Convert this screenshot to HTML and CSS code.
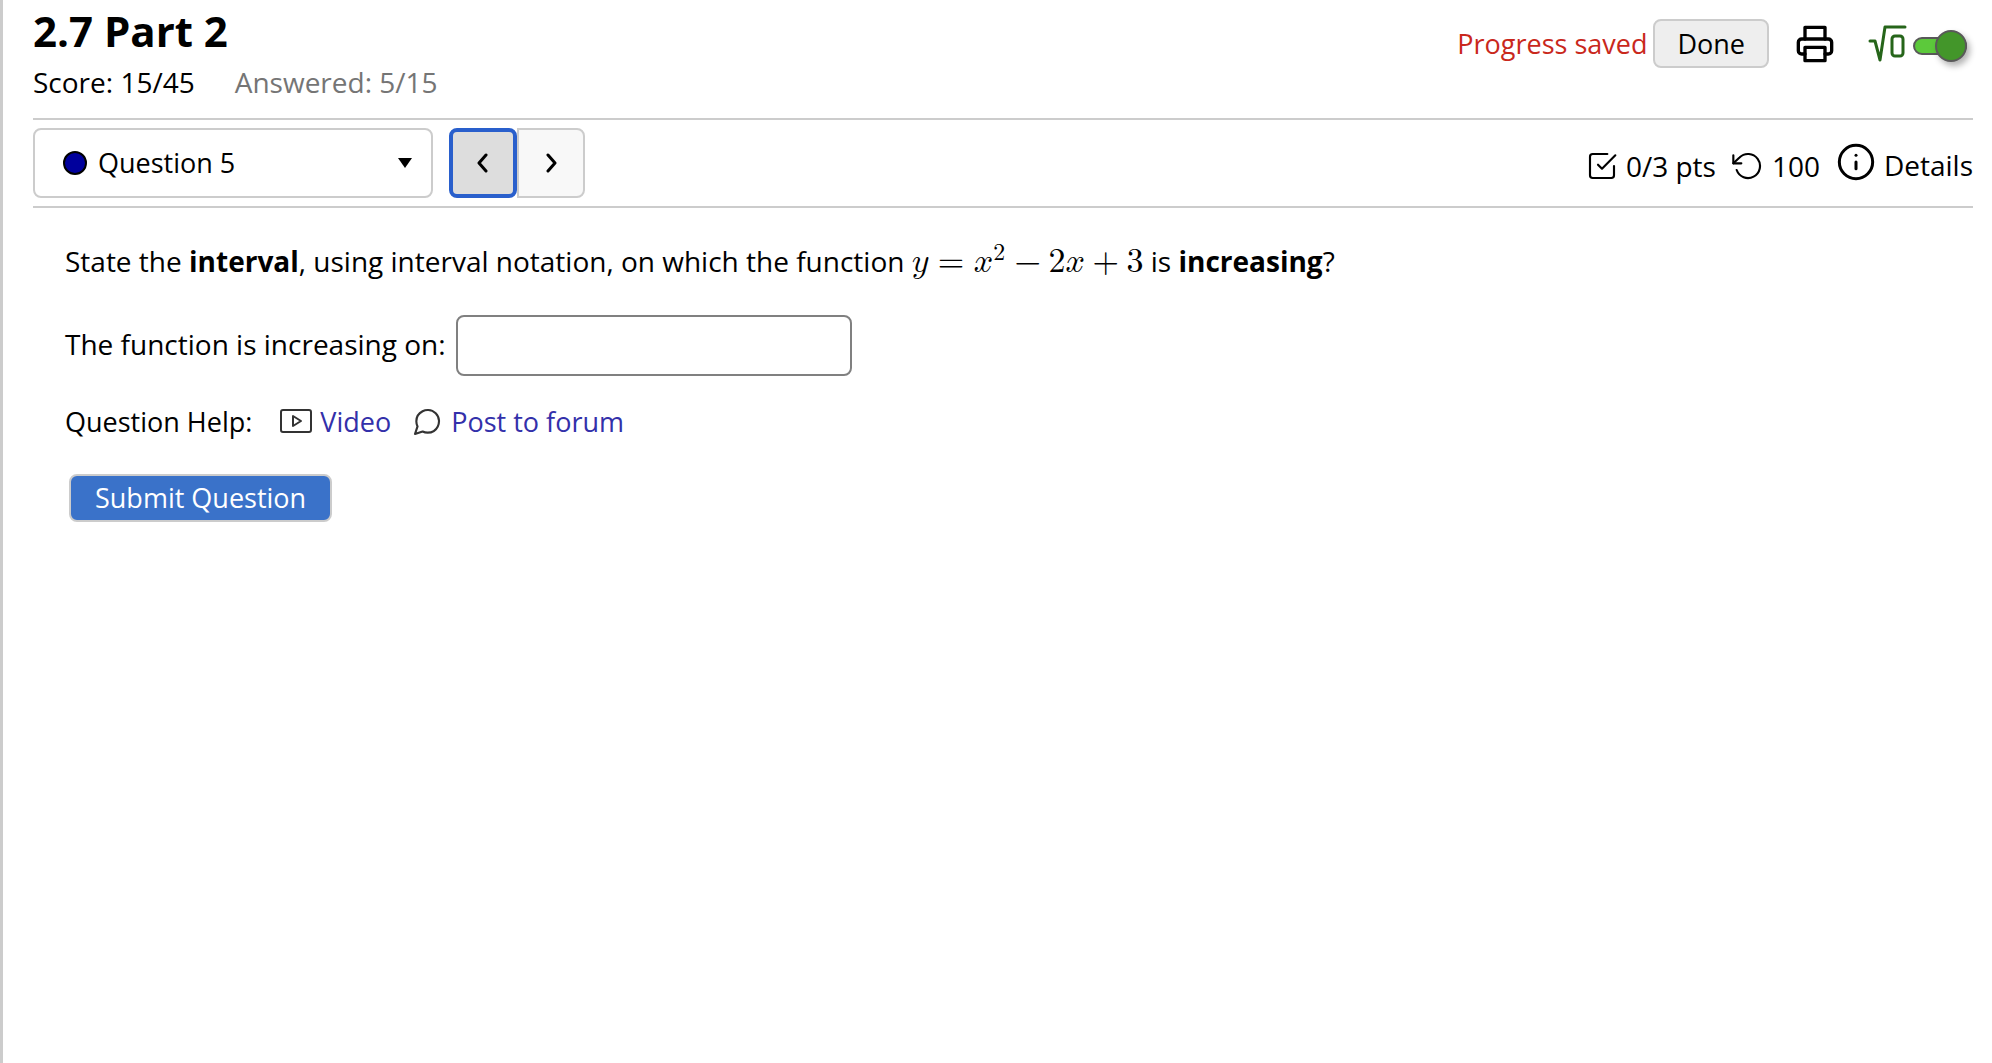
FILE: index.html
```
<!DOCTYPE html>
<html lang="en">
<head>
    <meta charset="UTF-8">
    <meta name="viewport" content="width=device-width, initial-scale=1.0">
    <title>2.7 Part 2</title>
    <link rel="stylesheet" href="styles.css">
</head>
<body>

<header class="assess-header">
    <div class="header-info">
        <h1>2.7 Part 2</h1>
        <div class="scores">
            <span>Score: 15/45</span>
            <span class="subdued">Answered: 5/15</span>
        </div>
    </div>
    <div class="header-tools">
        <span class="save-notice">Progress saved</span>
        <button type="button" class="done-btn">Done</button>
        <button type="button" class="plain-btn" aria-label="Print">
            <svg class="icon icon-large" viewBox="0 0 24 24">
                <polyline points="6 9 6 2 18 2 18 9"></polyline>
                <path d="M6 18H4a2 2 0 0 1-2-2v-5a2 2 0 0 1 2-2h16a2 2 0 0 1 2 2v5a2 2 0 0 1-2 2h-2"></path>
                <rect x="6" y="14" width="12" height="8"></rect>
            </svg>
        </button>
        <label class="math-toggle">
            <svg class="icon math-icon" viewBox="0 0 40 38" aria-hidden="true">
                <path d="M3 16h5l5 19L18 2h20"></path>
                <rect x="25" y="11" width="11" height="20" rx="3"></rect>
            </svg>
            <input type="checkbox" class="switch" aria-label="Equation editor" checked>
        </label>
    </div>
</header>

<!-- Question navigation -->
<nav class="question-nav">
    <div class="question-select">
        <svg class="status-dot" viewBox="0 0 24 24" aria-hidden="true">
            <circle cx="12" cy="12" r="11"></circle>
        </svg>
        <select id="question-number" aria-label="Question">
            <option selected>Question 5</option>
        </select>
        <svg class="caret" viewBox="0 0 16 12" aria-hidden="true">
            <path d="M1 1h14L8 11z"></path>
        </svg>
    </div>
    <div class="step-buttons">
        <button type="button" class="step-btn prev-btn" aria-label="Previous question">
            <svg class="icon chevron" viewBox="0 0 12 20"><polyline points="9 2 2 10 9 18"></polyline></svg>
        </button>
        <button type="button" class="step-btn next-btn" aria-label="Next question">
            <svg class="icon chevron" viewBox="0 0 12 20"><polyline points="3 2 10 10 3 18"></polyline></svg>
        </button>
    </div>
    <div class="question-details">
        <svg class="icon icon-medium" viewBox="0 0 24 24" aria-hidden="true">
            <polyline points="9 11 12 14 22 4"></polyline>
            <path d="M21 12v7a2 2 0 0 1-2 2H5a2 2 0 0 1-2-2V5a2 2 0 0 1 2-2h11"></path>
        </svg>
        <span class="points">0/3 pts</span>
        <svg class="icon icon-medium" viewBox="0 0 24 24" aria-hidden="true">
            <polyline points="1 4 1 10 7 10"></polyline>
            <path d="M3.51 15a9 9 0 1 0 2.13-9.36L1 10"></path>
        </svg>
        <span class="tries">100</span>
        <button type="button" class="plain-btn details-btn">
            <svg class="icon icon-large info-icon" viewBox="0 0 24 24" aria-hidden="true">
                <circle cx="12" cy="12" r="10"></circle>
                <line x1="12" y1="16" x2="12" y2="12"></line>
                <line x1="12" y1="8" x2="12" y2="8"></line>
            </svg>
            <span>Details</span>
        </button>
    </div>
</nav>

<!-- Question body -->
<main class="question">
    <p>State the <strong>interval</strong>, using interval notation, on which the function
        <math><mi>y</mi><mo>=</mo><msup><mi>x</mi><mn>2</mn></msup><mo>−</mo><mn>2</mn><mi>x</mi><mo>+</mo><mn>3</mn></math>
        is <strong>increasing</strong>?</p>
    <div class="answer">
        <label for="answer-box">The function is increasing on:</label>
        <input type="text" id="answer-box" autocomplete="off">
    </div>
    <div class="help">
        <span class="help-label">Question Help:</span>
        <a href="#video">
            <svg class="icon icon-medium" viewBox="0 0 32 32" aria-hidden="true">
                <rect x="1" y="4" width="30" height="22" rx="2"></rect>
                <path d="M13 10v10l8-5z"></path>
            </svg>
            <span>Video</span>
        </a>
        <a href="#forum">
            <svg class="icon icon-medium" viewBox="0 0 24 24" aria-hidden="true">
                <path d="M21 11.5a8.38 8.38 0 0 1-.9 3.8 8.5 8.5 0 0 1-7.6 4.7 8.38 8.38 0 0 1-3.8-.9L3 21l1.9-5.7a8.38 8.38 0 0 1-.9-3.8 8.5 8.5 0 0 1 4.7-7.6 8.38 8.38 0 0 1 3.8-.9h.5a8.48 8.48 0 0 1 8 8v.5z"></path>
            </svg>
            <span>Post to forum</span>
        </a>
    </div>
    <button type="button" class="submit-btn">Submit Question</button>
</main>

</body>
</html>
```
FILE: styles.css
```
body {
    font-family: "Trebuchet MS", "Open Sans", sans-serif;
    font-size: 27px;
    line-height: 36px;
    color: #000;
    background-color: #fff;
    margin: 0;
    padding: 0 19px 0 30px;
    border-left: 3px solid #ccc;
    box-sizing: border-box;
    min-height: 100vh;
}

button,
input,
select {
    font: inherit;
    color: inherit;
    box-sizing: border-box;
}

button {
    cursor: pointer;
}

.icon {
    display: block;
    flex: none;
    fill: none;
    stroke: currentColor;
    stroke-width: 2;
    stroke-linecap: round;
    stroke-linejoin: round;
}

.icon-large {
    width: 40px;
    height: 40px;
}

.icon-medium {
    width: 32px;
    height: 32px;
    stroke-width: 1.6;
}

.plain-btn {
    display: flex;
    align-items: center;
    padding: 0;
    border: none;
    background: none;
}

/* Header */
.assess-header {
    display: flex;
    justify-content: space-between;
    align-items: flex-start;
    padding-bottom: 18px;
    border-bottom: 2px solid #ccc;
}

h1 {
    margin: 0;
    padding-top: 2px;
    font-size: 42px;
    line-height: 58px;
}

.scores {
    display: flex;
    gap: 40px;
    padding-top: 4px;
    font-size: 28px;
}

.subdued {
    color: #757575;
}

.header-tools {
    display: flex;
    align-items: center;
    padding-top: 19px;
}

.save-notice {
    color: #c9281c;
}

.done-btn {
    height: 49px;
    margin: 0 26px 0 6px;
    padding: 0 22px;
    border: 2px solid #ccc;
    border-radius: 8px;
    background-color: #eee;
}

.math-toggle {
    display: flex;
    align-items: center;
    gap: 6px;
    margin: 0 6px 0 32px;
    color: #26651a;
}

.math-icon {
    width: 40px;
    height: 38px;
    stroke-width: 3;
}

.switch {
    appearance: none;
    display: flex;
    align-items: center;
    justify-content: flex-end;
    width: 54px;
    height: 18px;
    margin: 4px 0 0;
    border: 2px solid #595959;
    border-radius: 9px;
    background-color: #5cc93b;
    cursor: pointer;
}

.switch::before {
    content: "";
    flex: none;
    width: 28px;
    height: 28px;
    margin-right: -2px;
    border: 2px solid #595959;
    border-radius: 50%;
    background-color: #43962a;
    box-shadow: 3px 4px 6px rgba(0, 0, 0, 0.3);
}

/* Navigation */
.question-nav {
    display: flex;
    align-items: center;
    padding: 8px 0;
    border-bottom: 2px solid #ccc;
}

.question-select {
    display: flex;
    align-items: center;
    width: 400px;
    height: 70px;
    padding: 0 18px 0 28px;
    border: 2px solid #ccc;
    border-radius: 8px;
    box-sizing: border-box;
}

.question-select select {
    appearance: none;
    flex: 1;
    padding: 0 0 0 11px;
    border: none;
    background: none;
}

.status-dot {
    width: 24px;
    height: 24px;
    fill: #00009c;
    stroke: #000;
    stroke-width: 2;
}

.caret {
    width: 16px;
    height: 12px;
}

.step-buttons {
    display: flex;
    margin-left: 16px;
}

.step-btn {
    display: flex;
    align-items: center;
    justify-content: center;
    width: 68px;
    height: 70px;
    padding: 0;
    border: 2px solid #ccc;
    background-color: #f8f8f8;
}

.prev-btn {
    border: 4px solid #295fcc;
    border-radius: 8px;
    background-color: #ddd;
}

.next-btn {
    border-radius: 0 8px 8px 0;
}

.chevron {
    width: 12px;
    height: 20px;
    stroke-width: 3;
}

.question-details {
    display: flex;
    align-items: center;
    padding-top: 6px;
    margin-left: auto;
    font-size: 28px;
}

.points {
    padding: 0 16px 0 8px;
}

.tries {
    padding: 0 16px 0 8px;
}

.details-btn {
    gap: 8px;
}

.info-icon {
    margin-bottom: 8px;
    stroke-width: 1.8;
}

.details-btn span {
    padding-bottom: 2px;
}

/* Question */
.question {
    padding: 35px 32px;
}

.question p {
    margin: 0;
    font-size: 28px;
}

math {
    font-family: "Latin Modern Math", "Liberation Serif", math, serif;
    font-size: 34px;
    line-height: 36px;
}

.answer {
    display: flex;
    align-items: center;
    gap: 10px;
    margin-top: 36px;
    font-size: 28px;
}

.answer label {
    padding-bottom: 4px;
}

.answer input {
    width: 396px;
    height: 61px;
    padding: 0 12px;
    border: 2px solid #808080;
    border-radius: 8px;
}

.help {
    display: flex;
    align-items: center;
    margin-top: 28px;
}

.help-label {
    padding-right: 28px;
}

.help a {
    display: flex;
    align-items: center;
    gap: 8px;
    margin-right: 20px;
    color: #3330aa;
    text-decoration: none;
}

.help .icon {
    color: #333;
}

.help rect,
.help rect + path {
    stroke-width: 2;
}

.submit-btn {
    height: 48px;
    margin: 34px 0 0 4px;
    padding: 0 24px;
    border: 2px solid #ccc;
    border-radius: 8px;
    color: #fff;
    background-color: #3a72c9;
}
```
